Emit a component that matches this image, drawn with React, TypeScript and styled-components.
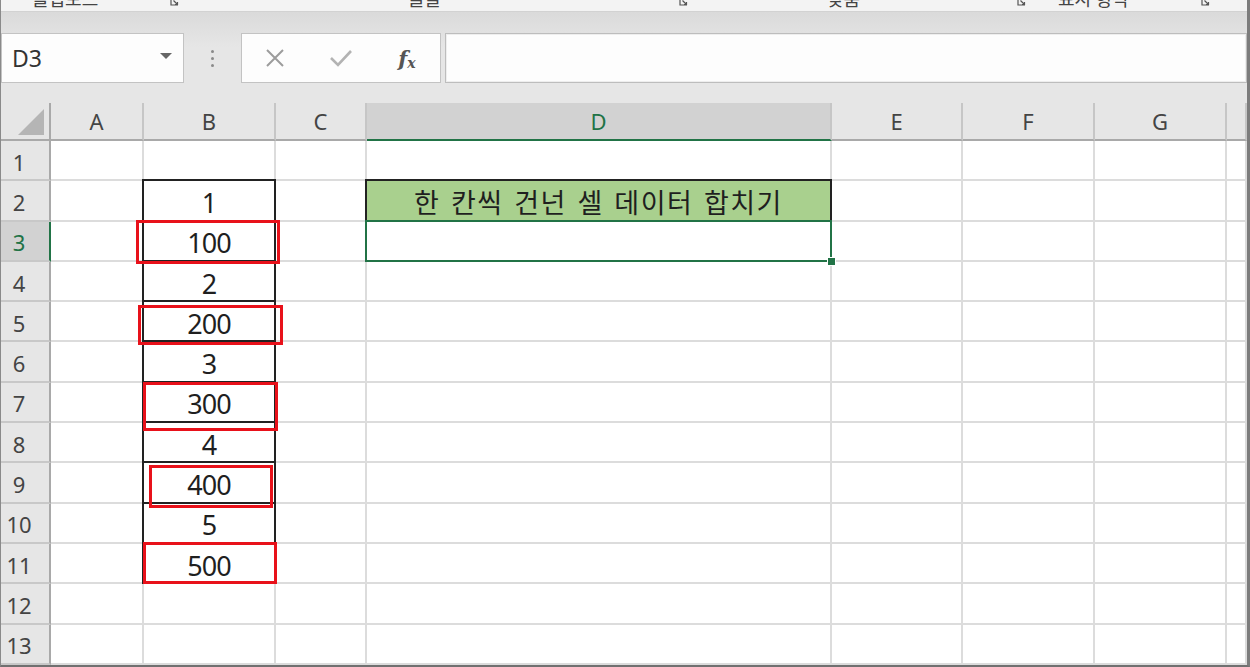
import styled, { createGlobalStyle, css } from 'styled-components'

const GlobalStyle = createGlobalStyle`
  html, body {
    margin: 0;
    padding: 0;
    background: #fff;
  }
  body {
    font-family: "Noto Sans", "Noto Sans CJK KR", sans-serif;
  }
`

const GREEN = '#217346'

const Frame = styled.div`
  width: 1250px;
  height: 667px;
  box-sizing: border-box;
  border-left: 1px solid #8a8a8a;
  border-right: 3px solid #7c7c7c;
  border-bottom: 2px solid #707070;
  display: flex;
  flex-direction: column;
  overflow: hidden;
  background: #fff;
`

// ribbon group captions, cut off by the crop of the screenshot
const Ribbon = styled.div`
  height: 12px;
  flex: none;
  box-sizing: border-box;
  display: flex;
  overflow: hidden;
  background: #f3f3f3;
  border-bottom: 1px solid #d2d2d2;
`

const Group = styled.div<{ $w: number; $pl: number; $pr: number }>`
  width: ${p => p.$w}px;
  flex: none;
  box-sizing: border-box;
  display: flex;
  align-items: flex-end;
  justify-content: space-between;
  padding-left: ${p => p.$pl}px;
  padding-right: ${p => p.$pr}px;
`

const GroupLabel = styled.span`
  font-family: "Noto Sans CJK KR", sans-serif;
  font-size: 18px;
  line-height: 22px;
  margin-bottom: 2px;
  color: #444;
  white-space: nowrap;
`

const Launcher = styled.svg`
  flex: none;
  width: 9px;
  height: 9px;
  margin-bottom: 5px;
`

const Band = styled.div`
  height: 88px;
  flex: none;
  box-sizing: border-box;
  padding: 21px 0 17px;
  display: flex;
  background: linear-gradient(#dadada, #e6e6e6 40%);
`

const NameBox = styled.div`
  width: 183px;
  flex: none;
  box-sizing: border-box;
  display: flex;
  align-items: center;
  justify-content: space-between;
  padding: 0 11px 0 10px;
  background: #fdfdfd;
  border: 1px solid #c3c3c3;
  font-size: 23px;
  color: #333;
`

const Caret = styled.span`
  width: 0;
  height: 0;
  border-left: 6px solid transparent;
  border-right: 6px solid transparent;
  border-top: 6px solid #666;
  margin-bottom: 4px;
`

const DotsArea = styled.div`
  width: 57px;
  flex: none;
  display: flex;
  flex-direction: column;
  align-items: center;
  justify-content: center;
  gap: 4px;
`

const Dot = styled.span`
  width: 3px;
  height: 3px;
  border-radius: 50%;
  background: #8a8a8a;
`

const FxBox = styled.div`
  width: 200px;
  flex: none;
  box-sizing: border-box;
  display: grid;
  grid-template-columns: repeat(3, 1fr);
  align-items: center;
  justify-items: center;
  background: #fdfdfd;
  border: 1px solid #c3c3c3;
`

const FxLabel = styled.span`
  font-family: "DejaVu Serif", "Liberation Serif", serif;
  font-style: italic;
  font-weight: bold;
  font-size: 21px;
  color: #555;
  sub {
    font-size: 14px;
    vertical-align: -2px;
  }
`

const Formula = styled.div`
  flex: 1;
  margin-left: 4px;
  background: #fdfdfd;
  border: 1px solid #bdbdbd;
  box-shadow: inset 0 0 0 1px #eeeeee;
`

const Sheet = styled.div`
  flex: 1;
  position: relative;
  display: grid;
  grid-template-columns: 50px 93px 132px 91px 465px 131px 132px 132px 1fr;
  grid-template-rows: 41px repeat(13, 40.3px);
  background: #e6e6e6;
`

const Corner = styled.div`
  align-self: end;
  height: 38px;
  box-sizing: border-box;
  display: flex;
  align-items: flex-end;
  justify-content: flex-end;
  padding: 0 5px 4px 0;
  border-right: 2px solid #a9a9a9;
  border-bottom: 2px solid #a9a9a9;
`

const ColHead = styled.div<{ $active?: boolean }>`
  align-self: end;
  height: 38px;
  box-sizing: border-box;
  display: flex;
  align-items: center;
  justify-content: center;
  background: ${p => (p.$active ? '#d2d2d2' : '#e6e6e6')};
  border-right: 2px solid #c6c6c6;
  border-bottom: 2px solid ${p => (p.$active ? GREEN : '#a9a9a9')};
  font-size: 22px;
  color: ${p => (p.$active ? GREEN : '#444')};
`

const RowHead = styled.div<{ $active?: boolean }>`
  box-sizing: border-box;
  display: flex;
  align-items: center;
  justify-content: center;
  padding: 3px 12px 0 0;
  background: ${p => (p.$active ? '#d2d2d2' : '#e6e6e6')};
  border-right: 2px solid ${p => (p.$active ? GREEN : '#a9a9a9')};
  border-bottom: 2px solid #c8c8c8;
  font-size: 22px;
  color: ${p => (p.$active ? GREEN : '#444')};
`

const Cell = styled.div<{ $box?: boolean; $fill?: string; $selected?: boolean; $wide?: boolean }>`
  position: relative;
  box-sizing: border-box;
  display: flex;
  align-items: center;
  justify-content: center;
  padding-top: 4px;
  background: ${p => p.$fill ?? '#fff'};
  border-right: 2px solid #dcdcdc;
  border-bottom: 2px solid #dcdcdc;
  font-size: 27px;
  letter-spacing: -1px;
  color: #1f1f1f;
  white-space: nowrap;
  ${p => p.$wide && css`
    padding-top: 2px;
    font-family: "Noto Sans CJK KR", sans-serif;
    font-size: 27px;
    letter-spacing: 1.5px;
    word-spacing: 3px;
  `}
  ${p => p.$box && css`
    &::after {
      content: '';
      position: absolute;
      top: -2px;
      left: -2px;
      right: -2px;
      bottom: -2px;
      border: 2px solid #222;
      pointer-events: none;
      z-index: 1;
    }
  `}
  ${p => p.$selected && css`
    &::after {
      content: '';
      position: absolute;
      top: -2px;
      left: -2px;
      right: -2px;
      bottom: -2px;
      border: 2px solid ${GREEN};
      pointer-events: none;
      z-index: 2;
    }
    &::before {
      content: '';
      position: absolute;
      right: -6px;
      bottom: -6px;
      width: 7px;
      height: 7px;
      background: ${GREEN};
      border: 1px solid #fff;
      z-index: 3;
    }
  `}
`

// red annotation boxes drawn over the B column
const Mark = styled.div<{ $x: number; $y: number; $w: number; $h: number }>`
  position: absolute;
  left: ${p => p.$x}px;
  top: ${p => p.$y}px;
  width: ${p => p.$w}px;
  height: ${p => p.$h}px;
  box-sizing: border-box;
  border: 3px solid #e8111a;
  z-index: 4;
  pointer-events: none;
`

const groups = [
  { label: '클립보드', w: 182, pl: 31, pr: 4 },
  { label: '글꼴', w: 507, pl: 225, pr: 2 },
  { label: '맞춤', w: 340, pl: 137, pr: 4 },
  { label: '표시 형식', w: 184, pl: 28, pr: 4 },
]

const columns = ['A', 'B', 'C', 'D', 'E', 'F', 'G', '']

const values: Record<number, string> = {
  2: '1', 3: '100', 4: '2', 5: '200', 6: '3', 7: '300', 8: '4', 9: '400', 10: '5', 11: '500',
}

const marks = [
  { x: 135, y: 120, w: 144, h: 44 },
  { x: 137, y: 205, w: 145, h: 40 },
  { x: 142, y: 282, w: 135, h: 49 },
  { x: 148, y: 365, w: 124, h: 43 },
  { x: 142, y: 442, w: 134, h: 42 },
]

const LauncherIcon = () => (
  <Launcher viewBox="0 0 9 9">
    <path d="M1 1v7h7" fill="none" stroke="#555" strokeWidth="1.2" />
    <path d="M3.5 3.5l4 4M5 7.5h2.5V5" fill="none" stroke="#555" strokeWidth="1.2" />
  </Launcher>
)

const App = () => {
  const rows = Array.from({ length: 13 }, (_, i) => i + 1)
  return (
    <>
      <GlobalStyle />
      <Frame>
        <Ribbon>
          {groups.map(g => (
            <Group key={g.label} $w={g.w} $pl={g.pl} $pr={g.pr}>
              <GroupLabel>{g.label}</GroupLabel>
              <LauncherIcon />
            </Group>
          ))}
        </Ribbon>

        <Band>
          <NameBox>
            D3
            <Caret />
          </NameBox>
          <DotsArea>
            <Dot />
            <Dot />
            <Dot />
          </DotsArea>
          <FxBox>
            <svg width="20" height="20" viewBox="0 0 20 20">
              <path d="M2 2l16 16M18 2L2 18" stroke="#9c9c9c" strokeWidth="2" fill="none" />
            </svg>
            <svg width="24" height="20" viewBox="0 0 24 20">
              <path d="M2 10l7 7L22 3" stroke="#b3b3b3" strokeWidth="2.6" fill="none" />
            </svg>
            <FxLabel>
              f<sub>x</sub>
            </FxLabel>
          </FxBox>
          <Formula />
        </Band>

        <Sheet>
          <Corner>
            <svg width="26" height="26" viewBox="0 0 26 26">
              <polygon points="26,0 26,26 0,26" fill="#b5b5b5" />
            </svg>
          </Corner>
          {columns.map((c, i) => (
            <ColHead key={i} $active={c === 'D'}>
              {c}
            </ColHead>
          ))}
          {rows.map(r => (
            <Row key={r} r={r} />
          ))}
          {marks.map((m, i) => (
            <Mark key={i} $x={m.x} $y={m.y} $w={m.w} $h={m.h} />
          ))}
        </Sheet>
      </Frame>
    </>
  )
}

const Row = ({ r }: { r: number }) => (
  <>
    <RowHead $active={r === 3}>{r}</RowHead>
    {columns.map((c, i) => {
      if (c === 'B' && values[r]) {
        return (
          <Cell key={i} $box>
            {values[r]}
          </Cell>
        )
      }
      if (c === 'D' && r === 2) {
        return (
          <Cell key={i} $box $fill="#a9d08e" $wide>
            한 칸씩 건넌 셀 데이터 합치기
          </Cell>
        )
      }
      if (c === 'D' && r === 3) {
        return <Cell key={i} $selected />
      }
      return <Cell key={i} />
    })}
  </>
)

export default App
